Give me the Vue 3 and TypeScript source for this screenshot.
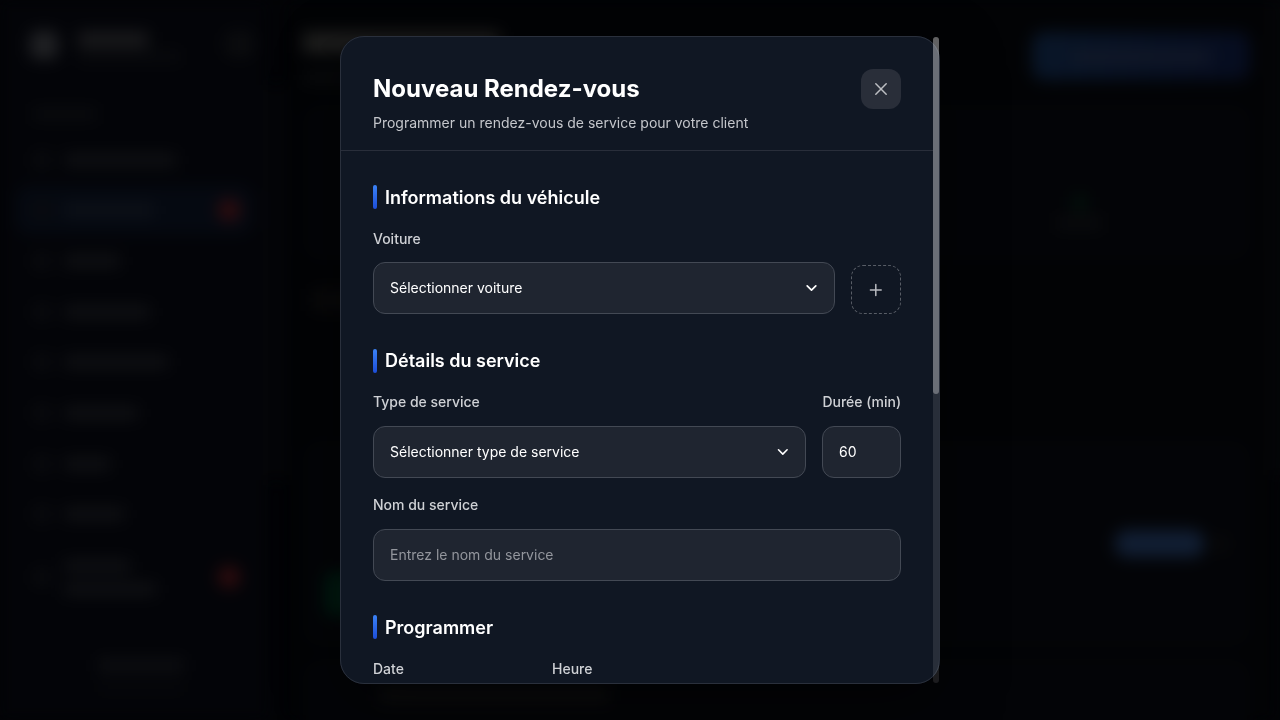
<script setup lang="ts">
import { ref } from 'vue'

interface NavItem {
  width: number
  second?: number
  active?: boolean
  badge?: boolean
}

const navItems: NavItem[] = [
  { width: 112 },
  { width: 90, active: true, badge: true },
  { width: 56 },
  { width: 86 },
  { width: 104 },
  { width: 74 },
  { width: 46 },
  { width: 60 },
  { width: 66, second: 92, badge: true },
]

const duration = ref('60')
const serviceName = ref('')
</script>

<template>
  <div class="screen">
    <div class="page" aria-hidden="true">
      <aside class="sidebar">
        <div class="brand">
          <span class="logo"></span>
          <span class="brand-text"><i class="name"></i><i class="tagline"></i></span>
          <span class="collapse"></span>
        </div>
        <span class="nav-label"></span>
        <nav class="nav">
          <div v-for="(item, i) in navItems" :key="i" class="nav-item" :class="{ active: item.active, tall: item.second }">
            <span class="nav-icon"></span>
            <span class="nav-lines">
              <i :style="{ width: item.width + 'px' }"></i>
              <i v-if="item.second" :style="{ width: item.second + 'px' }"></i>
            </span>
            <span v-if="item.badge" class="badge"></span>
          </div>
        </nav>
        <div class="account"><i></i><i></i></div>
      </aside>
      <div class="rail"></div>
      <main class="main">
        <div class="topbar">
          <div class="heading"><i></i><i></i></div>
          <div class="primary"><i></i></div>
        </div>
        <div class="card stats"><span class="stat"><i></i><i></i></span></div>
        <div class="filter"></div>
        <div class="card job">
          <span class="time"></span>
          <span class="pill"></span>
          <span class="dot"></span>
        </div>
        <div class="card last"><span></span></div>
      </main>
      <div class="page-scroll"></div>
    </div>

    <div class="overlay">
      <section class="modal" role="dialog" aria-modal="true">
        <div class="modal-content">
          <header class="modal-header">
            <div>
              <h2>Nouveau Rendez-vous</h2>
              <p>Programmer un rendez-vous de service pour votre client</p>
            </div>
            <button class="close" type="button" aria-label="Fermer">
              <svg width="20" height="20" viewBox="0 0 20 20" fill="none" stroke="currentColor" stroke-width="1.5" stroke-linecap="round">
                <path d="M4.8 4.8 15.2 15.2M15.2 4.8 4.8 15.2" />
              </svg>
            </button>
          </header>

          <form class="form" @submit.prevent>
            <section class="group">
              <h3>Informations du véhicule</h3>
              <div class="row end">
                <div class="field grow">
                  <label>Voiture</label>
                  <button class="control select" type="button">
                    <span>Sélectionner voiture</span>
                    <svg width="12" height="8" viewBox="0 0 12 8" fill="none" stroke="currentColor" stroke-width="1.7" stroke-linecap="round" stroke-linejoin="round"><path d="M1.2 1.8 5.5 6.1 9.8 1.8" /></svg>
                  </button>
                </div>
                <button class="add" type="button" aria-label="Ajouter">
                  <svg width="14" height="14" viewBox="0 0 14 14" fill="none" stroke="currentColor" stroke-width="1.5" stroke-linecap="round"><path d="M6.8 1.6V12.4M1.4 7H12.2" /></svg>
                </button>
              </div>
            </section>

            <section class="group">
              <h3>Détails du service</h3>
              <div class="row">
                <div class="field grow">
                  <label>Type de service</label>
                  <button class="control select" type="button">
                    <span>Sélectionner type de service</span>
                    <svg width="12" height="8" viewBox="0 0 12 8" fill="none" stroke="currentColor" stroke-width="1.6" stroke-linecap="round" stroke-linejoin="round"><path d="M1.5 1.8 5.8 6.1 10.1 1.8" /></svg>
                  </button>
                </div>
                <div class="field minutes">
                  <label>Durée (min)</label>
                  <input v-model="duration" class="control" />
                </div>
              </div>
              <div class="field">
                <label>Nom du service</label>
                <input v-model="serviceName" class="control" placeholder="Entrez le nom du service" />
              </div>
            </section>

            <section class="group">
              <h3>Programmer</h3>
              <div class="row schedule">
                <div class="field"><label>Date</label></div>
                <div class="field"><label>Heure</label></div>
              </div>
            </section>
          </form>
        </div>
        <div class="scroll-track"><div class="scroll-thumb"></div></div>
      </section>
    </div>
  </div>
</template>

<style>
body { background: #020306; overflow: hidden; }
</style>

<style scoped>
* { box-sizing: border-box; }
h2, h3, p { margin: 0; }
button, input { font: inherit; }
i, span { display: block; flex-shrink: 0; }
.screen {
  position: relative;
  width: 1280px;
  height: 720px;
  overflow: hidden;
  background: #020306;
  font-family: Inter, "Noto Sans", sans-serif;
  font-size: 14px;
  line-height: 1.6;
}

.page { display: flex; width: 1280px; height: 720px; filter: blur(8px); }
.sidebar { width: 268px; height: 720px; padding: 31px 16px 0; background: #030408; }
.brand { display: flex; height: 76.5px; padding-left: 14px; }
.logo { width: 28px; height: 28px; border-radius: 7px; background: #202124; }
.brand-text { width: 147px; margin-left: 20px; padding-top: 1px; }
.name { width: 70px; height: 15px; background: #1b1b1d; }
.tagline { width: 103px; height: 9px; margin-top: 5px; background: #0a0b0e; }
.collapse { width: 28px; height: 26px; border-radius: 8px; background: #0b0c0e; }
.nav-label { width: 65px; height: 10px; margin: 1px 0 17px 16px; background: #0b0c0f; }
.nav-item { display: flex; align-items: center; height: 48px; margin-bottom: 2.7px; padding: 0 12px 0 18px; border-radius: 12px; }
.nav-item.active { background: #050911; }
.nav-item.tall { height: 72px; }
.nav-icon { width: 16px; height: 16px; margin-right: 14px; border-radius: 4px; background: #0b0c0f; }
.nav-lines { display: grid; gap: 11px; flex: 1; }
.nav-lines i { height: 12px; background: #101114; }
.active .nav-lines i { background: #0e1219; }
.badge { width: 22px; height: 22px; border-radius: 50%; background: #300c0e; }
.account { display: grid; gap: 12px; width: 86px; margin: 46px auto 0 82px; }
.account i { height: 13px; background: #0d0e11; }
.account i + i { height: 6px; background: #08090b; }
.rail { width: 16px; height: 395px; margin-top: 85px; background: #050609; }
.main { display: flex; flex-direction: column; width: 990px; padding: 32px 24px 0 19px; background: #020305; }
.topbar { display: flex; flex-shrink: 0; justify-content: space-between; height: 73px; }
.heading i { width: 196px; height: 21px; background: #1e1e1d; }
.heading i + i { width: 230px; height: 11px; margin-top: 19px; background: #0a0b0d; }
.primary { width: 218px; height: 48px; padding: 19px 40px; border-radius: 12px; background: linear-gradient(100deg, #091628, #060c1f); }
.primary i { height: 12px; background: #121827; }
.card { flex-shrink: 0; border-radius: 16px; background: #030407; }
.stats { height: 155px; padding: 91px 146px 0 0; }
.stat { display: grid; justify-items: center; gap: 8px; width: 50px; margin-left: auto; }
.stat i { width: 13px; height: 14px; background: #03140c; }
.stat i + i { width: 46px; height: 10px; background: #0b0c0e; }
.filter { flex-shrink: 0; width: 62px; height: 22px; margin: 29px 0 130px 8px; background: #09090a; }
.job { display: flex; align-items: center; height: 205px; padding: 0 16px 0 22px; }
.time { align-self: flex-end; width: 70px; height: 44px; margin: 0 auto 30px 0; background: #001a10; border-radius: 8px; }
.pill { width: 89px; height: 27px; border-radius: 12px; background: #111e33; }
.dot { width: 16px; height: 16px; margin: 0 6px 0 8px; border-radius: 50%; background: #0a0a0a; }
.last { height: 100px; margin-top: 14px; padding: 29px 76px; }
.last span { width: 230px; height: 13px; background: #0e0e0e; }
.page-scroll { width: 6px; height: 475px; background: #090a0b; }

.overlay { position: absolute; inset: 0; display: flex; align-items: center; justify-content: center; }
.modal {
  position: relative;
  width: 600px;
  height: 648px;
  border-radius: 24px;
  background: #101723;
  box-shadow: 0 20px 60px rgba(0, 0, 0, 0.5);
  will-change: transform;
}
.modal-content {
  height: 648px;
  padding-right: 6px;
  overflow: hidden;
  border: 1px solid #2a303c;
  border-radius: 24px;
}
.modal-header { display: flex; justify-content: space-between; height: 113.8px; padding: 32px 32px 0; border-bottom: 1px solid #292e3a; }
h2 { padding-top: 1px; color: #fff; font-size: 24px; font-weight: 700; line-height: 38.4px; }
.modal-header p { margin-top: 4px; color: #c4c6cb; font-size: 14px; line-height: 22.4px; white-space: nowrap; }
.close { display: grid; place-items: center; width: 40px; height: 40px; padding: 0; border: 0; border-radius: 12px; background: #292e39; color: #bcbec2; }
.form { padding: 32px; }
.group { margin-bottom: 32px; }
.group:first-child { margin-bottom: 32.2px; }
h3 { display: flex; align-items: center; gap: 8px; height: 28.8px; margin-bottom: 16px; padding-top: 0.8px; color: #fff; font-size: 18px; font-weight: 600; line-height: 30px; }
h3::before { content: ""; width: 4px; height: 24px; margin-top: -0.8px; border-radius: 2px; background: linear-gradient(180deg, #3b82f6, #1d4ed8); }
.row { display: flex; gap: 16px; margin-bottom: 16px; }
.row.end { align-items: flex-end; }
.group:first-child .row { margin-bottom: 0; }
.grow { flex: 1; }
label { display: block; margin-bottom: 12px; color: #cfd1d5; font-size: 14px; font-weight: 500; line-height: 22.4px; white-space: nowrap; }
.control {
  display: block;
  width: 100%;
  height: 52.4px;
  padding: 0 16px;
  border: 1px solid #434954;
  border-radius: 12px;
  outline: 0;
  background: #1f2530;
  color: #fff;
  font-size: 14px;
}
.control::placeholder { color: #93969d; opacity: 1; }
.select { display: flex; align-items: center; justify-content: space-between; text-align: left; }
.minutes { width: 78.6px; }
.minutes .control { padding-left: 15.6px; }
.add { display: grid; place-items: center; width: 50px; height: 49.6px; padding: 0; border: 1px dashed #585d66; border-radius: 12px; background: transparent; color: #b8bac0; }
.schedule .field { width: 163px; }

.scroll-track { position: absolute; top: 1px; right: 1px; width: 6px; height: 646px; border-radius: 3px; background: rgba(255, 255, 255, 0.1); }
.scroll-thumb { width: 6px; height: 357px; border-radius: 3px; background: rgba(255, 255, 255, 0.31); }
</style>
